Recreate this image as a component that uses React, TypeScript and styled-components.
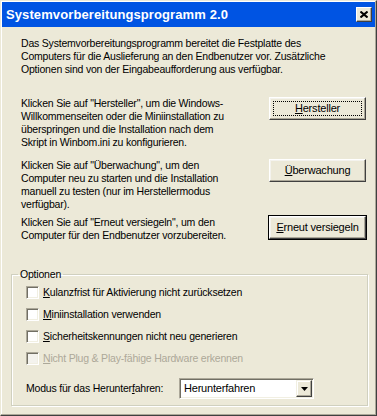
import React from 'react';
import styled, { createGlobalStyle, css } from 'styled-components';

const GlobalStyle = createGlobalStyle`
    html, body {
        margin: 0;
        padding: 0;
        background: #ffffff;
    }
    * {
        box-sizing: border-box;
    }
`;

const FONT = `"Liberation Sans", Arial, sans-serif`;

const Window = styled.div`
    width: 377px;
    height: 416px;
    background: #ece9d8;
    border: 1px solid;
    border-color: #ece9d8 #404040 #404040 #ece9d8;
    box-shadow: inset -1px -1px 0 #aca899, inset 1px 1px 0 #ffffff;
    font-family: ${FONT};
    font-size: 10.5px;
    letter-spacing: -0.2px;
    line-height: 13px;
    color: #000;
    overflow: hidden;
`;

const TitleBar = styled.div`
    height: 25px;
    margin: 1px 1px 0 1px;
    padding: 0 3px 0 4px;
    background: #0054e3;
    display: flex;
    align-items: center;
    justify-content: space-between;
`;

const Title = styled.span`
    color: #ffffff;
    font-weight: bold;
    font-size: 13px;
    letter-spacing: 0.1px;
`;

const CloseButton = styled.div`
    width: 16px;
    height: 15px;
    background: #ece9d8;
    border: 1px solid;
    border-color: #ffffff #404040 #404040 #ffffff;
    box-shadow: inset -1px -1px 0 #aca899;
    display: flex;
    align-items: center;
    justify-content: center;
`;

const Body = styled.div`
    padding: 10px 8px 0 10px;
`;

const Intro = styled.div`
    padding: 0 2px 0 10px;
`;

const Para = styled.p`
    margin: 0;
    white-space: nowrap;
`;

const Row = styled.div<{ $top: number }>`
    display: flex;
    justify-content: space-between;
    align-items: flex-start;
    margin-top: ${(p) => p.$top}px;
`;

const Button = styled.div<{ $focused?: boolean; $default?: boolean }>`
    position: relative;
    width: 97px;
    height: 23px;
    background: #ece9d8;
    border: 1px solid;
    border-color: #ffffff #404040 #404040 #ffffff;
    box-shadow: inset -1px -1px 0 #aca899, inset 1px 1px 0 #f4f3ee;
    display: flex;
    align-items: center;
    justify-content: center;
    padding-bottom: 1px;
    font-size: 11px;
    ${(p) =>
        p.$focused &&
        css`
            &::after {
                content: '';
                position: absolute;
                inset: 3px;
                border: 1px dotted #000;
            }
        `}
    ${(p) =>
        p.$default &&
        css`
            outline: 1px solid #000;
        `}
`;

const Key = styled.span`
    text-decoration: underline;
    text-underline-offset: 1px;
`;

const Group = styled.fieldset`
    margin: 26px 0 0 0;
    padding: 0 6px 6px 6px;
    border: 1px solid #d0d0bf;
    box-shadow: 1px 1px 0 #ffffff, inset 1px 1px 0 #ffffff;
    min-width: 0;
`;

const Legend = styled.legend`
    padding: 0 2px;
    height: 13px;
    line-height: 13px;
`;

const Options = styled.div`
    padding-left: 8px;
`;

const OptionRow = styled.div<{ $disabled?: boolean }>`
    height: 22px;
    display: flex;
    align-items: center;
    gap: 4px;
    color: ${(p) => (p.$disabled ? '#aca899' : '#000')};
`;

const Check = styled.span<{ $disabled?: boolean }>`
    width: 13px;
    height: 13px;
    flex: none;
    background: ${(p) => (p.$disabled ? '#f4f3ee' : '#ffffff')};
    border: 1px solid;
    border-color: #aca899 #ffffff #ffffff #aca899;
    box-shadow: inset 1px 1px 0 #716f64, inset -1px -1px 0 #f1efe2;
`;

const ModeRow = styled.div`
    display: flex;
    align-items: center;
    margin-top: 9px;
`;

const ModeLabel = styled.span`
    width: 153px;
`;

const Select = styled.div`
    width: 135px;
    height: 21px;
    background: #ffffff;
    border: 1px solid;
    border-color: #aca899 #ffffff #ffffff #aca899;
    box-shadow: inset 1px 1px 0 #716f64, inset -1px -1px 0 #f1efe2;
    display: flex;
    align-items: center;
    justify-content: space-between;
    padding: 1px 1px 1px 4px;
`;

const SelectValue = styled.span`
    font-size: 11px;
`;

const Arrow = styled.div`
    width: 16px;
    height: 17px;
    background: #ece9d8;
    border: 1px solid;
    border-color: #f1efe2 #404040 #404040 #f1efe2;
    box-shadow: inset -1px -1px 0 #aca899, inset 1px 1px 0 #ffffff;
    display: flex;
    align-items: center;
    justify-content: center;
`;

const options = [
    { key: 'K', rest: 'ulanzfrist für Aktivierung nicht zurücksetzen' },
    { key: 'M', rest: 'iniinstallation verwenden' },
    { key: 'S', rest: 'icherheitskennungen nicht neu generieren' },
    { key: 'N', rest: 'icht Plug & Play-fähige Hardware erkennen', disabled: true },
];

export default function App() {
    return (
        <>
            <GlobalStyle />
            <Window>
                <TitleBar>
                    <Title>Systemvorbereitungsprogramm 2.0</Title>
                    <CloseButton>
                        <svg width="8" height="7" viewBox="0 0 8 7">
                            <path
                                d="M0.5 0.5 L7.5 6.5 M7.5 0.5 L0.5 6.5"
                                stroke="#000"
                                strokeWidth="2"
                            />
                        </svg>
                    </CloseButton>
                </TitleBar>
                <Body>
                    <Intro>
                        <Para>
                            Das Systemvorbereitungsprogramm bereitet die Festplatte des
                            <br />
                            Computers für die Auslieferung an den Endbenutzer vor. Zusätzliche
                            <br />
                            Optionen sind von der Eingabeaufforderung aus verfügbar.
                        </Para>
                        <Row $top={21}>
                            <Para>
                                Klicken Sie auf "Hersteller", um die Windows-
                                <br />
                                Willkommenseiten oder die Miniinstallation zu
                                <br />
                                überspringen und die Installation nach dem
                                <br />
                                Skript in Winbom.ini zu konfigurieren.
                            </Para>
                            <Button $focused>
                                <span>
                                    <Key>H</Key>ersteller
                                </span>
                            </Button>
                        </Row>
                        <Row $top={10}>
                            <Para>
                                Klicken Sie auf "Überwachung", um den
                                <br />
                                Computer neu zu starten und die Installation
                                <br />
                                manuell zu testen (nur im Herstellermodus
                                <br />
                                verfügbar).
                            </Para>
                            <Button>
                                <span>
                                    <Key>Ü</Key>berwachung
                                </span>
                            </Button>
                        </Row>
                        <Row $top={5}>
                            <Para>
                                Klicken Sie auf "Erneut versiegeln", um den
                                <br />
                                Computer für den Endbenutzer vorzubereiten.
                            </Para>
                            <Button $default>
                                <span>
                                    <Key>E</Key>rneut versiegeln
                                </span>
                            </Button>
                        </Row>
                    </Intro>
                    <Group>
                        <Legend>Optionen</Legend>
                        <Options>
                            {options.map((o) => (
                                <OptionRow key={o.key} $disabled={o.disabled}>
                                    <Check $disabled={o.disabled} />
                                    <span>
                                        <Key>{o.key}</Key>
                                        {o.rest}
                                    </span>
                                </OptionRow>
                            ))}
                            <ModeRow>
                                <ModeLabel>
                                    Modus für das Herunter<Key>f</Key>ahren:
                                </ModeLabel>
                                <Select>
                                    <SelectValue>Herunterfahren</SelectValue>
                                    <Arrow>
                                        <svg width="7" height="4" viewBox="0 0 7 4">
                                            <path d="M0 0 H7 L3.5 4 Z" fill="#000" />
                                        </svg>
                                    </Arrow>
                                </Select>
                            </ModeRow>
                        </Options>
                    </Group>
                </Body>
            </Window>
        </>
    );
}
